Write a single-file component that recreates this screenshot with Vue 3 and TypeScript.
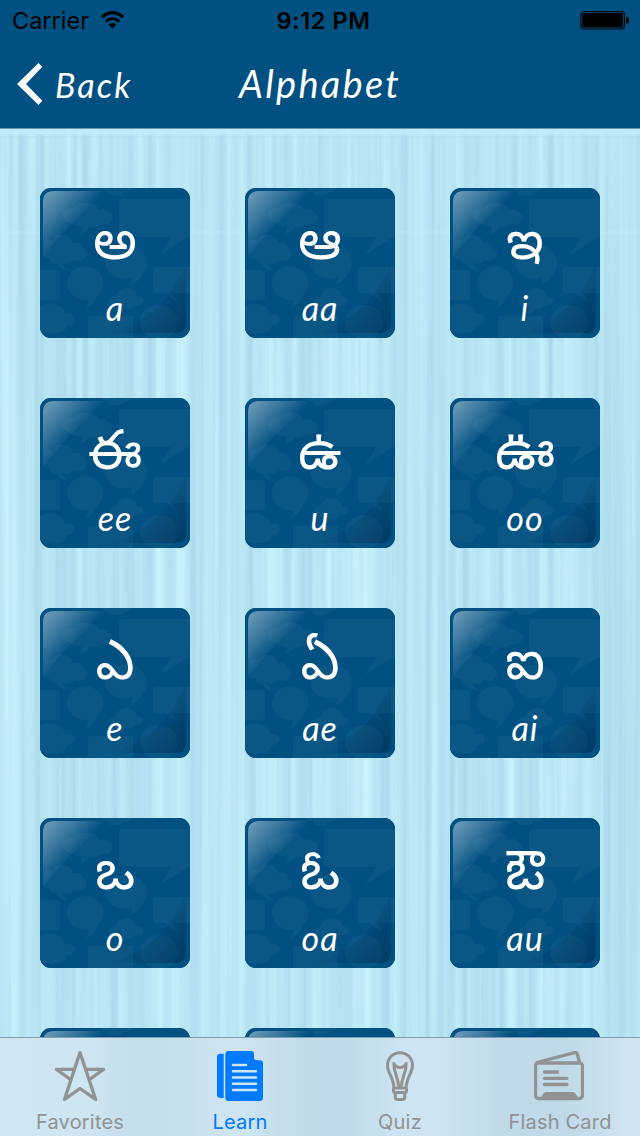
<template>
  <div class="screen">
    <svg class="defs" width="0" height="0" aria-hidden="true">
      <defs>
        <linearGradient id="gloss" gradientUnits="userSpaceOnUse" x1="3" y1="4" x2="37" y2="35">
          <stop offset="0" stop-color="#fff" stop-opacity="0.44" />
          <stop offset="0.5" stop-color="#fff" stop-opacity="0.24" />
          <stop offset="1" stop-color="#fff" stop-opacity="0" />
        </linearGradient>
        <linearGradient id="shade" gradientUnits="userSpaceOnUse" x1="146" y1="142" x2="112" y2="108">
          <stop offset="0" stop-color="#00203c" stop-opacity="0.42" />
          <stop offset="1" stop-color="#00203c" stop-opacity="0.05" />
        </linearGradient>
        <symbol id="tile-art" viewBox="0 0 150 150">
          <rect width="150" height="150" fill="#005082" />
          <g fill="#0a5786">
            <path d="M83 11H150V49H148L120 67L131 49H83Q79 49 79 45V15Q79 11 83 11Z" />
            <path d="M62 0H92Q90 4 84 4Q80 9 72 7Q68 8 68 3Q63 4 62 0Z" />
            <path d="M31 35Q22 33 23 26Q24 19 34 20Q39 13 48 15Q57 15 59 22Q66 19 68 24Q75 26 72 32Q69 38 61 36Q56 41 50 39Q48 44 39 46Q43 42 41 38Q35 39 31 35Z" />
            <path d="M4 55Q8 50 13 52Q17 45 25 47Q32 49 33 55Q42 54 43 60Q49 63 46 69Q42 75 34 72Q30 78 22 75Q24 80 29 83Q20 82 17 76Q10 76 10 71Q3 71 3 66Z" />
            <path d="M44 78A19 17 0 0 1 58 107Q54 117 45 121Q49 116 48 112A19 17 0 1 1 44 78Z" />
            <path d="M88 57A19 18 0 0 1 103 86Q99 94 90 97Q93 92 92 89A19 17 0 1 1 88 57Z" />
            <path d="M0 82H17Q20 82 20 85V109Q20 112 17 112H0Z" />
            <path d="M0 118Q8 113 17 117Q24 119 25 126Q34 125 35 131Q34 137 27 137Q25 146 15 145Q7 148 0 141Z" />
            <path d="M51 128H93V150H48V131Q48 128 51 128Z" />
            <path d="M75 109Q78 99 88 100Q96 101 97 108Q105 109 103 114Q100 118 95 117Q91 123 85 120Q84 126 77 126Q79 124 79 119Q70 120 69 114Q69 109 75 109Z" />
            <path d="M116 79H150V105H133L138 114Q129 110 126 105H116Q113 105 113 102V82Q113 79 116 79Z" />
            <ellipse cx="119" cy="134" rx="19" ry="17" />
          </g>
          <path d="M3 69V14Q3 3 14 3H70Q32 31 3 69Z" fill="url(#gloss)" />
          <path d="M146 74V134Q146 145 135 145H68Q125 131 146 74Z" fill="url(#shade)" />
        </symbol>
      </defs>
    </svg>

    <header class="header">
      <div class="status-bar">
        <div class="carrier">
          <span class="carrier-name">Carrier</span>
          <svg class="wifi" viewBox="0 0 24 18">
            <path d="M1.5 6.2Q12-3 22.5 6.2" stroke-width="3" />
            <path d="M5.3 10.4Q12 4.8 18.7 10.4" stroke-width="2.8" />
            <path class="wifi-dot" d="M8.2 13.6Q12 10.4 15.8 13.6L12 17.4Z" />
          </svg>
        </div>
        <span class="clock">9:12 PM</span>
        <svg class="battery" viewBox="0 0 50 20">
          <rect x="0.8" y="1.6" width="43.6" height="17.4" rx="3.2" fill="none" stroke="#000" stroke-width="1.1" />
          <rect x="2.2" y="3" width="40.8" height="14.6" rx="1.8" />
          <path d="M46 7Q49 7 49 10.3Q49 13.6 46 13.6Z" />
        </svg>
      </div>
      <nav class="nav-bar">
        <button class="back">
          <svg class="chevron" viewBox="0 0 26 42">
            <path d="M21.5 0L25.3 3.8L9 21L25.3 37.7L21.5 42L0 21Z" />
          </svg>
          <span class="back-label">Back</span>
        </button>
        <h1 class="title">Alphabet</h1>
      </nav>
    </header>

    <main class="board">
      <svg class="wood" width="640" height="909" aria-hidden="true">
        <filter id="grain" x="0" y="0" width="100%" height="100%" color-interpolation-filters="sRGB">
          <feTurbulence type="fractalNoise" baseFrequency="0.11 0.0009" numOctaves="3" seed="8" />
          <feColorMatrix
            values="0.17 0 0 0 0.64
                    0.16 0 0 0 0.82
                    0.11 0 0 0 0.9
                    0 0 0 0 1"
          />
        </filter>
        <rect width="640" height="909" filter="url(#grain)" />
        <rect width="640" height="6" fill="#bfecfb" opacity="0.85" />
        <rect y="7" width="640" height="2" fill="#aedbea" opacity="0.3" />
        <rect y="102" width="640" height="3" fill="#c4f1ff" opacity="0.25" />
      </svg>
      <div class="grid">
        <div v-for="(letter, i) in letters" :key="i" class="tile">
          <svg class="tile-bg"><use href="#tile-art" /></svg>
          <template v-if="letter.glyph">
            <span class="glyph">{{ letter.glyph }}</span>
            <span class="sound">{{ letter.sound }}</span>
          </template>
        </div>
      </div>
    </main>

    <footer class="tab-bar">
      <a v-for="tab in tabs" :key="tab.id" class="tab" :class="{ active: tab.id === activeTab }">
        <svg v-if="tab.id === 'favorites'" class="tab-icon" viewBox="0 0 50 50">
          <path d="M25 1.5L9.5 48.4L25 37.5L40.7 48.4Z" />
          <path d="M19 18.3H1.5L15.5 28.5M31 18.3H48.5L34.5 28.5" />
        </svg>
        <svg v-else-if="tab.id === 'learn'" class="tab-icon" viewBox="0 0 50 50">
          <path class="solid" d="M5 2.7H8.7V47H5Q2 46.5 2 43.5V6Q2 3 5 2.7Z" />
          <path class="solid" d="M13.5 0H36Q39 0 39 3V6.5Q39 9.3 42 9.3H45Q48 9.3 48 12.3V46.5Q48 50 44.5 50H13.5Q10.3 50 10.3 46.5V3.5Q10.3 0 13.5 0Z" />
          <path class="rules" d="M18 14H31M18 20.3H41M18 26.5H41M18 32.8H41M18 39H41" />
        </svg>
        <svg v-else-if="tab.id === 'quiz'" class="tab-icon bulb" viewBox="0 0 50 50">
          <path d="M18.8 36C18.5 26 12.5 22 12.5 14.5C12.5 7 18 1.7 25 1.7S37.5 7 37.5 14.5C37.5 22 31.5 26 31.2 36" />
          <path d="M23.6 34.5C23 26 18.8 22 18.8 12.5Q21 16.500 25 16.500Q29 16.500 31.200 12.500C31.200 22 27 26 26.400 34.500" />
          <rect x="18.5" y="37" width="13" height="4.6" rx="1.5" />
          <path d="M20.3 42.500V46Q20.3 48.500 22.500 48.500H27.500Q29.700 48.500 29.700 46V42.500" />
        </svg>
        <svg v-else class="tab-icon" viewBox="0 0 50 50">
          <rect x="1.5" y="12" width="47" height="35.5" rx="3" />
          <path d="M3 11.5L40.5 1.7Q42.6 1.2 43.2 3L45.5 11.5" />
          <path d="M10.5 21H23.5M10.5 27.3H33M10.5 33.5H33" />
          <path class="solid" d="M7.5 47Q9 41 12 41H39Q41.5 41 44 47Z" />
        </svg>
        <span class="tab-label">{{ tab.label }}</span>
      </a>
    </footer>
  </div>
</template>

<script setup lang="ts">
import { ref } from 'vue'

interface Letter {
  glyph: string
  sound: string
}

const letters: Letter[] = [
  { glyph: 'అ', sound: 'a' },
  { glyph: 'ఆ', sound: 'aa' },
  { glyph: 'ఇ', sound: 'i' },
  { glyph: 'ఈ', sound: 'ee' },
  { glyph: 'ఉ', sound: 'u' },
  { glyph: 'ఊ', sound: 'oo' },
  { glyph: 'ఎ', sound: 'e' },
  { glyph: 'ఏ', sound: 'ae' },
  { glyph: 'ఐ', sound: 'ai' },
  { glyph: 'ఒ', sound: 'o' },
  { glyph: 'ఓ', sound: 'oa' },
  { glyph: 'ఔ', sound: 'au' },
  { glyph: '', sound: '' },
  { glyph: '', sound: '' },
  { glyph: '', sound: '' },
]

const tabs = [
  { id: 'favorites', label: 'Favorites' },
  { id: 'learn', label: 'Learn' },
  { id: 'quiz', label: 'Quiz' },
  { id: 'cards', label: 'Flash Card' },
]

const activeTab = ref('learn')
</script>

<style>
body {
  margin: 0;
}
</style>

<style scoped>
.screen {
  position: relative;
  display: flex;
  flex-direction: column;
  width: 640px;
  height: 1136px;
  overflow: hidden;
  background: #b9e5f3;
  font-family: Inter, "Liberation Sans", sans-serif;
}

.defs {
  position: absolute;
}

.header {
  flex: none;
  box-sizing: border-box;
  height: 129px;
  background: #005082;
  border-bottom: 1px solid #6f96a6;
}

.status-bar {
  display: grid;
  grid-template-columns: 1fr auto 1fr;
  align-items: center;
  height: 40px;
  padding: 0 10px 0 12px;
  color: #000;
  font-size: 24px;
}

.carrier {
  display: flex;
  align-items: center;
  gap: 11px;
}

.carrier-name {
  font-size: 23.5px;
}

.wifi {
  width: 25px;
  height: 18px;
  fill: none;
  stroke: #000;
}

.wifi .wifi-dot {
  fill: #000;
  stroke: none;
}

.clock {
  padding: 0 0 0 5px;
  font-size: 23.5px;
  font-weight: 600;
  letter-spacing: 0.6px;
}

.battery {
  justify-self: end;
  width: 50px;
  height: 20px;
}

.nav-bar {
  display: grid;
  grid-template-columns: 1fr auto 1fr;
  align-items: center;
  height: 88px;
  padding: 0 17px;
  color: #fff;
  font-family: "Segoe Print", Lato, sans-serif;
  font-style: italic;
}

.back {
  display: flex;
  align-items: center;
  gap: 12px;
  padding: 0;
  border: 0;
  background: none;
  color: inherit;
  font: inherit;
}

.chevron {
  width: 26px;
  height: 42px;
  fill: #fff;
}

.back-label {
  padding-top: 1px;
  font-size: 34px;
  line-height: 42px;
  letter-spacing: 2.1px;
}

.title {
  margin: 0 0 3px;
  font-size: 38px;
  font-weight: 400;
  line-height: 44px;
  letter-spacing: 2.3px;
}

.board {
  position: relative;
  flex: none;
  height: 908px;
  overflow: hidden;
}

.wood {
  position: absolute;
  top: 0;
  left: 0;
}

.grid {
  position: relative;
  display: grid;
  grid-template-columns: repeat(3, 150px);
  grid-auto-rows: 150px;
  gap: 60px 55px;
  padding: 59px 40px 0;
}

.tile {
  position: relative;
  display: flex;
  flex-direction: column;
  align-items: center;
  padding-top: 28px;
  box-sizing: border-box;
  border-radius: 11px;
  overflow: hidden;
  background: #005082;
  color: #fff;
}

.tile-bg {
  position: absolute;
  top: 0;
  left: 0;
  width: 150px;
  height: 150px;
}

.glyph {
  position: relative;
  height: 70px;
  font-family: "Noto Sans Telugu", "Noto Sans", sans-serif;
  font-size: 55px;
  font-weight: 400;
  line-height: 66px;
}

.sound {
  position: relative;
  font-family: "Segoe Print", Lato, sans-serif;
  font-size: 34px;
  font-style: italic;
  line-height: 44px;
  letter-spacing: 1px;
}

.tab-bar {
  display: grid;
  grid-template-columns: repeat(4, 160px);
  flex: 1;
  border-top: 1px solid #7d9fae;
  background: linear-gradient(
    90deg,
    #cfe6f3 0,
    #cee4f1 90px,
    #c1dcea 145px,
    #cbe2ef 205px,
    #cfe5f2 235px,
    #c1dae9 305px,
    #bfdbe9 350px,
    #cee4f2 405px,
    #cde3f1 440px,
    #c0dae9 500px,
    #bfd9e8 565px,
    #cde3ef 620px,
    #d0e5f1 640px
  );
}

.tab {
  display: flex;
  flex-direction: column;
  align-items: center;
  padding-top: 13px;
  color: #929292;
}

.tab:last-child .tab-icon {
  margin-right: 2px;
}

.tab.active {
  color: #007aff;
}

.tab-icon {
  width: 50px;
  height: 50px;
  fill: none;
  stroke: currentColor;
  stroke-width: 3.3;
  stroke-linecap: round;
  stroke-linejoin: round;
}

.tab-icon.bulb {
  stroke-width: 3;
}

.tab-icon .solid {
  fill: currentColor;
  stroke: none;
}

.tab-icon .rules {
  stroke: #cde4f1;
  stroke-width: 2.6;
}

.tab-label {
  margin-top: 9px;
  font-size: 20px;
  line-height: 24px;
  letter-spacing: 0.2px;
}
</style>
